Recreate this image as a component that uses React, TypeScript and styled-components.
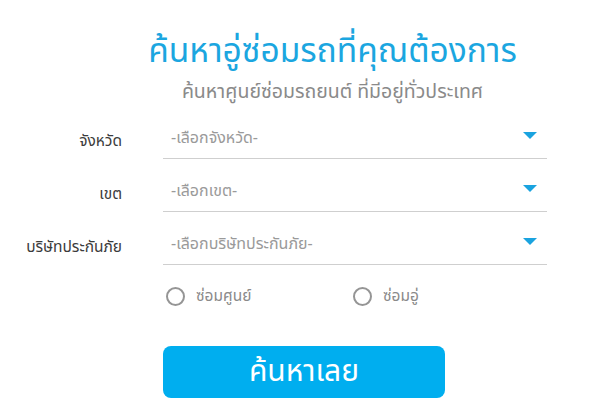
import React from 'react';
import styled, { createGlobalStyle } from 'styled-components';

const GlobalStyle = createGlobalStyle`
  html, body {
    margin: 0;
    padding: 0;
    background: #ffffff;
  }
  body {
    font-family: "Noto Sans Thai", "Noto Sans", "Liberation Sans", sans-serif;
  }
`;

const Page = styled.div`
  width: 599px;
  height: 413px;
  overflow: hidden;
`;

const Header = styled.div`
  padding: 30px 0 0 66px;
  text-align: center;
`;

const Title = styled.h1`
  margin: 0;
  font-size: 33.5px;
  font-weight: 400;
  line-height: 44px;
  color: #1ba6e0;
`;

const Subtitle = styled.p`
  margin: 4px 0 0;
  font-size: 19.5px;
  line-height: 28px;
  color: #8a8a8a;
`;

const Form = styled.div`
  display: grid;
  grid-template-columns: 122px 384px;
  column-gap: 41px;
  margin-top: 12px;
`;

const Label = styled.div`
  text-align: right;
  font-size: 15.5px;
  color: #3c3c3c;
  height: 53px;
  line-height: 48px;
`;

const Select = styled.div`
  box-sizing: border-box;
  display: flex;
  align-items: center;
  justify-content: space-between;
  border-bottom: 1px solid #cfcfcf;
  height: 41px;
  margin-bottom: 12px;
  padding: 0 10px 0 8px;
  font-size: 16px;
  color: #9a9a9a;
`;

const Arrow = styled.span`
  width: 0;
  height: 0;
  border-left: 7px solid transparent;
  border-right: 7px solid transparent;
  border-top: 7px solid #1aa3df;
  margin-bottom: 6px;
`;

const RadioRow = styled.div`
  display: flex;
  padding-left: 166px;
  margin-top: 8px;
`;

const RadioItem = styled.label`
  display: flex;
  align-items: center;
  width: 187px;
  gap: 11px;
  font-size: 15.5px;
  color: #8a8a8a;
`;

const Circle = styled.span`
  width: 15px;
  height: 15px;
  border: 2px solid #959595;
  border-radius: 50%;
`;

const Button = styled.button`
  display: block;
  margin: 38px 0 0 163px;
  width: 282px;
  height: 52px;
  border: none;
  border-radius: 8px;
  background: #00aeef;
  color: #ffffff;
  font-family: inherit;
  font-size: 30px;
  line-height: 52px;
  padding: 0;
`;

const fields = [
  { label: 'จังหวัด', placeholder: '-เลือกจังหวัด-' },
  { label: 'เขต', placeholder: '-เลือกเขต-' },
  { label: 'บริษัทประกันภัย', placeholder: '-เลือกบริษัทประกันภัย-' },
];

export default function App() {
  return (
    <Page>
      <GlobalStyle />
      <Header>
        <Title>ค้นหาอู่ซ่อมรถที่คุณต้องการ</Title>
        <Subtitle>ค้นหาศูนย์ซ่อมรถยนต์ ที่มีอยู่ทั่วประเทศ</Subtitle>
      </Header>
      <Form>
        {fields.map((f) => (
          <React.Fragment key={f.label}>
            <Label>{f.label}</Label>
            <Select>
              <span>{f.placeholder}</span>
              <Arrow />
            </Select>
          </React.Fragment>
        ))}
      </Form>
      <RadioRow>
        <RadioItem>
          <Circle />
          ซ่อมศูนย์
        </RadioItem>
        <RadioItem>
          <Circle />
          ซ่อมอู่
        </RadioItem>
      </RadioRow>
      <Button>ค้นหาเลย</Button>
    </Page>
  );
}
